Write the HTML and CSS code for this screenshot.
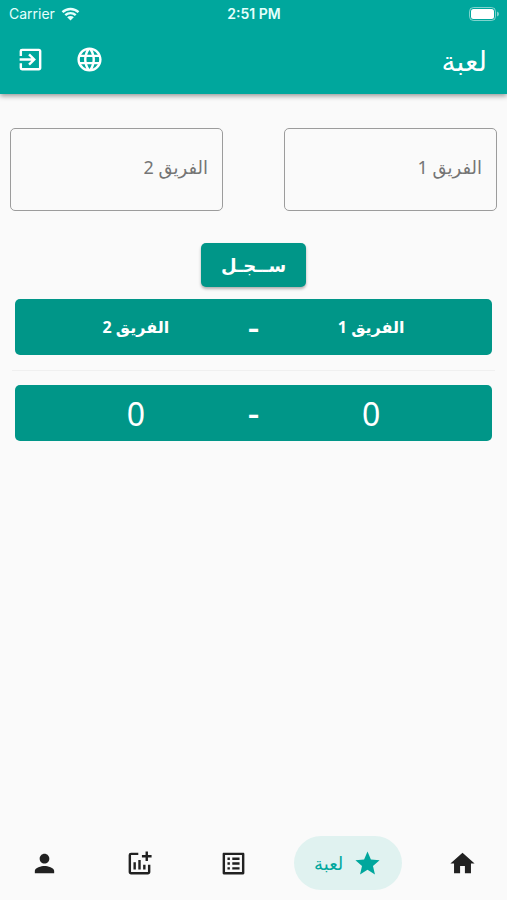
FILE: index.html
```html
<!DOCTYPE html>
<html lang="ar" dir="rtl">
<head>
<meta charset="utf-8">
<meta name="viewport" content="width=device-width, initial-scale=1">
<title>لعبة</title>
<link rel="stylesheet" href="styles.css">
</head>
<body>
<header class="top">
  <div class="status" dir="ltr">
    <div class="carrier">
      <span>Carrier</span>
      <svg class="wifi" viewBox="0 0 18 14" aria-hidden="true"><path d="M1 5.2a11.5 11.5 0 0 1 16 0M3.8 8.2a7.5 7.5 0 0 1 10.4 0" fill="none" stroke="currentColor" stroke-width="2.4"/><path d="M9 13.6 5.7 10.3a4.7 4.7 0 0 1 6.6 0z" fill="currentColor"/></svg>
    </div>
    <span class="time">2:51 PM</span>
    <svg class="battery" viewBox="0 0 30 14" aria-hidden="true"><rect x=".5" y=".5" width="26" height="13" rx="4" fill="none" stroke="currentColor" opacity=".5"/><rect x="2" y="2" width="23" height="10" rx="2.5" fill="currentColor"/><path d="M28 4.5q2 .8 2 2.5t-2 2.5z" fill="currentColor" opacity=".5"/></svg>
  </div>
  <div class="bar">
    <h1 class="title">لعبة</h1>
    <div class="actions">
      <button class="icon-button" type="button" aria-label="اللغة"><svg class="icon" viewBox="0 0 24 24"><path d="M11.99 2C6.47 2 2 6.48 2 12s4.47 10 9.99 10C17.52 22 22 17.52 22 12S17.52 2 11.99 2zm6.93 6h-2.95a15.65 15.65 0 0 0-1.38-3.56A8.03 8.03 0 0 1 18.92 8zM12 4.04c.83 1.2 1.48 2.53 1.91 3.96h-3.82c.43-1.43 1.08-2.76 1.91-3.96zM4.26 14C4.1 13.36 4 12.69 4 12s.1-1.36.26-2h3.38c-.08.66-.14 1.32-.14 2s.06 1.34.14 2H4.26zm.82 2h2.95c.32 1.25.78 2.45 1.38 3.56A7.99 7.99 0 0 1 5.08 16zm2.95-8H5.08a7.99 7.99 0 0 1 4.33-3.56A15.65 15.65 0 0 0 8.03 8zM12 19.96c-.83-1.2-1.48-2.53-1.91-3.96h3.82c-.43 1.43-1.08 2.76-1.91 3.96zM14.34 14H9.66c-.09-.66-.16-1.32-.16-2s.07-1.35.16-2h4.68c.09.65.16 1.32.16 2s-.07 1.34-.16 2zm.25 5.56c.6-1.11 1.06-2.31 1.38-3.56h2.95a8.03 8.03 0 0 1-4.33 3.56zM16.36 14c.08-.66.14-1.32.14-2s-.06-1.34-.14-2h3.38c.16.64.26 1.31.26 2s-.1 1.36-.26 2h-3.38z"/></svg></button>
      <button class="icon-button" type="button" aria-label="خروج"><svg class="icon" viewBox="0 0 24 24"><path d="M10.09 15.59 11.5 17l5-5-5-5-1.41 1.41L12.67 11H3v2h9.67l-2.58 2.59zM19 3H5a2 2 0 0 0-2 2v4h2V5h14v14H5v-4H3v4a2 2 0 0 0 2 2h14c1.1 0 2-.9 2-2V5c0-1.1-.9-2-2-2z"/></svg></button>
    </div>
  </div>
</header>

<main class="content">
  <form class="entry">
    <div class="fields">
      <input class="field" type="text" placeholder="الفريق 1" aria-label="الفريق 1">
      <input class="field" type="text" placeholder="الفريق 2" aria-label="الفريق 2">
    </div>
    <button class="submit" type="button">ســجـل</button>
  </form>
  <section class="board">
    <div class="row names"><span>الفريق 1</span><span class="dash">-</span><span>الفريق 2</span></div>
    <hr class="divider">
    <div class="row scores"><span>0</span><span class="dash">-</span><span>0</span></div>
  </section>
</main>

<nav class="nav">
  <a class="tab" href="#home" aria-label="الرئيسية"><svg class="icon" viewBox="0 0 24 24"><path d="M10 20v-6h4v6h5v-8h3L12 3 2 12h3v8z"/></svg></a>
  <a class="tab active" href="#game" aria-current="page"><svg class="icon" viewBox="0 0 24 24"><path d="M12 17.27 18.18 21l-1.64-7.03L22 9.24l-7.19-.61L12 2 9.19 8.63 2 9.24l5.46 4.73L5.82 21z"/></svg><span>لعبة</span></a>
  <a class="tab" href="#list" aria-label="القائمة"><svg class="icon" viewBox="0 0 24 24"><path d="M11 7h6v2h-6zm0 4h6v2h-6zm0 4h6v2h-6zM7 7h2v2H7zm0 4h2v2H7zm0 4h2v2H7zM20.1 3H3.9c-.5 0-.9.4-.9.9v16.2c0 .4.4.9.9.9h16.2c.4 0 .9-.5.9-.9V3.9c0-.5-.5-.9-.9-.9zM19 19H5V5h14v14z"/></svg></a>
  <a class="tab" href="#stats" aria-label="الإحصائيات"><svg class="icon" viewBox="0 0 24 24"><path d="M22 5v2h-3v3h-2V7h-3V5h3V2h2v3h3zm-3 14H5V5h6V3H5a2 2 0 0 0-2 2v14c0 1.1.9 2 2 2h14c1.1 0 2-.9 2-2v-6h-2v6zm-4-6v4h2v-4h-2zm-4 4h2V9h-2v8zm-2 0v-6H7v6h2z"/></svg></a>
  <a class="tab" href="#profile" aria-label="الملف"><svg class="icon" viewBox="0 0 24 24"><path d="M12 12c2.21 0 4-1.79 4-4s-1.79-4-4-4-4 1.79-4 4 1.79 4 4 4zm0 2c-2.67 0-8 1.34-8 4v2h16v-2c0-2.66-5.33-4-8-4z"/></svg></a>
</nav>
</body>
</html>
```
FILE: styles.css
```css
* {
  box-sizing: border-box;
}

body {
  margin: 0;
  min-height: 100vh;
  display: flex;
  flex-direction: column;
  background: #fafafa;
  color: #212121;
  font-family: "Noto Sans", "DejaVu Sans", sans-serif;
}

button {
  border: 0;
  padding: 0;
  color: inherit;
  font-family: inherit;
}

.icon {
  display: block;
  width: 29px;
  height: 29px;
  fill: currentColor;
}

.top {
  background: #00a79d;
  color: #fff;
  box-shadow: 0 2px 5px rgba(0, 0, 0, 0.4);
}

.status {
  display: grid;
  grid-template-columns: 1fr auto 1fr;
  align-items: center;
  height: 27px;
  padding: 0 8px 0 9px;
  font-family: Inter, sans-serif;
  font-size: 14px;
  color: #e6fffc;
}

.carrier {
  display: flex;
  align-items: center;
  gap: 6px;
}

.wifi {
  width: 19px;
  height: 14px;
}

.time {
  font-weight: 600;
}

.battery {
  justify-self: end;
  width: 30px;
  height: 14px;
  color: #fff;
}

.bar {
  display: flex;
  align-items: center;
  justify-content: space-between;
  height: 67px;
  padding: 0 20px 2px 16px;
}

.title {
  margin: 0;
  font-size: 28px;
  font-weight: 400;
  line-height: 32px;
}

.actions {
  display: flex;
  gap: 30px;
}

.icon-button {
  background: none;
}

.content {
  flex: 1;
  padding: 34px 10px 0;
}

.entry {
  display: flex;
  flex-direction: column;
  align-items: center;
  gap: 32px;
}

.fields {
  display: grid;
  grid-template-columns: 1fr 1fr;
  gap: 61px;
  width: 100%;
}

.field {
  width: 100%;
  height: 83px;
  padding: 0 14px 6px;
  border: 1px solid #9c9c9c;
  border-radius: 5px;
  background: transparent;
  font-family: inherit;
  font-size: 18px;
}

.field::placeholder {
  color: #757575;
  opacity: 1;
}

.submit {
  height: 44px;
  padding: 0 20px;
  border-radius: 5px;
  background: #009688;
  color: #fff;
  font-size: 18px;
  font-weight: 700;
  box-shadow: 0 2px 3px rgba(0, 0, 0, 0.3);
}

.board {
  padding: 12px 5px 0;
}

.row {
  display: grid;
  grid-template-columns: repeat(3, 1fr);
  align-items: center;
  justify-items: center;
  height: 56px;
  padding: 0 62px;
  border-radius: 5px;
  background: #009688;
  color: #fff;
  white-space: nowrap;
}

.names {
  font-size: 16px;
  font-weight: 700;
}

.scores {
  font-size: 32px;
}

.dash {
  font-size: 36px;
  font-weight: 500;
  line-height: 56px;
}

.divider {
  margin: 15px -3px 14px;
  border: 0;
  border-top: 1px solid #f0f0f0;
}

.nav {
  display: flex;
  align-items: center;
  justify-content: space-between;
  padding: 10px;
}

.tab {
  display: flex;
  align-items: center;
  gap: 10px;
  height: 54px;
  padding: 0 20px;
  border-radius: 27px;
  color: #212121;
  text-decoration: none;
}

.active {
  background: #e0f2f0;
  color: #00a79d;
  font-size: 18px;
}
```
